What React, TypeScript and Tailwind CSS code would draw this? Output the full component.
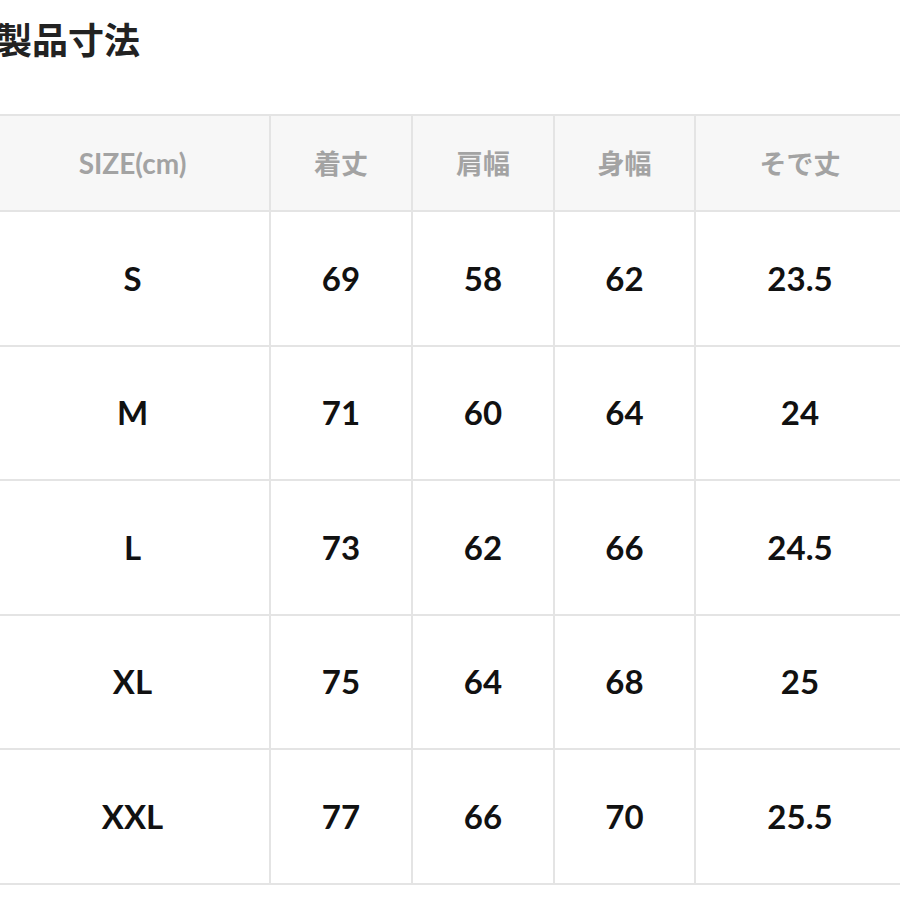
import React from "react";

const rows = [
  ["S", "69", "58", "62", "23.5"],
  ["M", "71", "60", "64", "24"],
  ["L", "73", "62", "66", "24.5"],
  ["XL", "75", "64", "68", "25"],
  ["XXL", "77", "66", "70", "25.5"],
];

const headers = ["SIZE(cm)", "着丈", "肩幅", "身幅", "そで丈"];
const widths = ["w-[275px]", "w-[142px]", "w-[142px]", "w-[141px]", "w-[210px]"];

export default function App() {
  return (
    <div
      className="w-[900px] h-[900px] overflow-hidden bg-white"
      style={{ fontFamily: 'Lato, "Noto Sans CJK JP", sans-serif' }}
    >
      <h1
        className="ml-[-4px] pt-[13px] h-[114px] text-[36px] font-bold leading-[50px] text-[#222]"
        style={{ fontFamily: '"Noto Sans CJK JP", sans-serif' }}
      >
        製品寸法
      </h1>
      <table className="ml-[-6px] border-collapse table-fixed w-[912px]">
        <colgroup>
          {widths.map((w, i) => (
            <col key={i} className={w} />
          ))}
        </colgroup>
        <thead>
          <tr className="h-[96px] bg-[#f7f7f7]">
            {headers.map((h, i) => (
              <th
                key={i}
                className="border-2 border-[#e4e4e4] text-center align-middle font-bold text-[#a3a3a3]"
                style={
                  i === 0
                    ? { fontFamily: 'Lato, sans-serif', fontSize: '28px' }
                    : { fontFamily: '"Noto Sans CJK JP", sans-serif', fontSize: '27px' }
                }
              >
                {h}
              </th>
            ))}
          </tr>
        </thead>
        <tbody>
          {rows.map((r, ri) => (
            <tr key={ri} className="h-[134.5px]">
              {r.map((c, ci) => (
                <td
                  key={ci}
                  className="border-2 border-[#e4e4e4] text-center align-middle text-[33px] font-bold text-[#111]"
                >
                  {c}
                </td>
              ))}
            </tr>
          ))}
        </tbody>
      </table>
    </div>
  );
}
